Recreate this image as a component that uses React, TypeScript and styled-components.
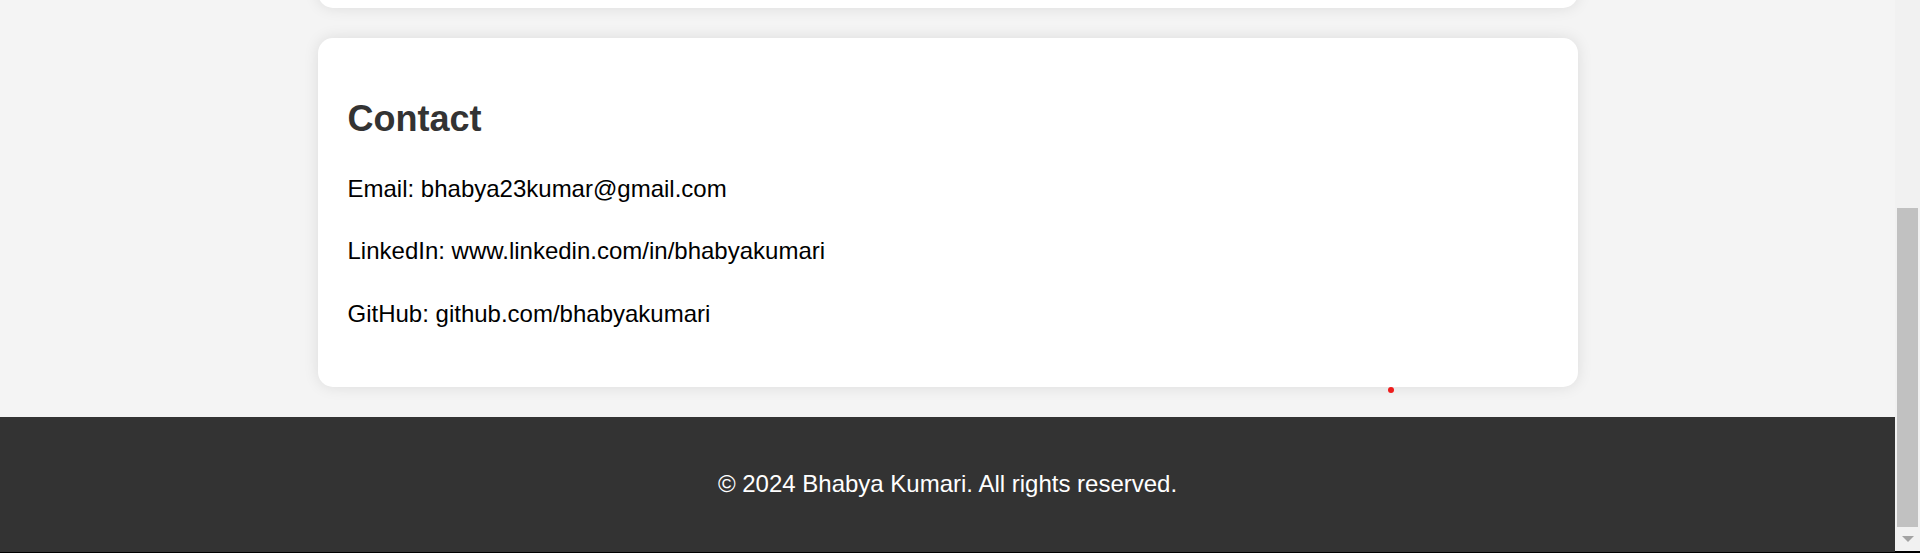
import React from "react";
import styled, { createGlobalStyle } from "styled-components";

const GlobalStyle = createGlobalStyle`
  html, body {
    margin: 0;
    padding: 0;
    height: 553px;
    overflow: hidden;
  }
  body {
    font-family: "Liberation Sans", Arial, sans-serif;
    font-size: 24px;
    line-height: 1.6;
    background: #f4f4f4;
    color: #000;
  }
`;

const Frame = styled.div`
  height: 553px;
  display: flex;
  flex-direction: column;
`;

const Window = styled.div`
  flex: 1;
  display: flex;
  min-height: 0;
`;

const Page = styled.div`
  flex: 1;
  display: flex;
  flex-direction: column;
  background: #f4f4f4;
  position: relative;
  min-width: 0;
`;

const Main = styled.main`
  display: flex;
  flex-direction: column;
  align-items: center;
  gap: 30px;
  padding-bottom: 30px;
`;

const Clip = styled.div`
  height: 8px;
  width: 1260px;
  display: flex;
  align-items: flex-end;
  overflow: visible;
  clip-path: inset(0 -30px -30px -30px);
`;

const Card = styled.section<{ $height?: number }>`
  box-sizing: border-box;
  width: 1260px;
  background: #fff;
  border-radius: 15px;
  box-shadow: 0 0 15px rgba(0, 0, 0, 0.1);
  padding: 30px;
  flex-shrink: 0;
  ${(p) => (p.$height ? `height: ${p.$height}px;` : "")}
`;

const Heading = styled.h2`
  margin: 30px 0;
  font-size: 36px;
  line-height: normal;
  font-weight: bold;
  color: #333;
`;

const Line = styled.p`
  margin: 24px 0;
`;

const Footer = styled.footer`
  background: #333;
  color: #fff;
  text-align: center;
  padding: 24px;
  flex: 1;
`;

const FooterText = styled.p`
  margin: 24px 0;
`;

const CursorDot = styled.span`
  position: absolute;
  left: 1388px;
  top: 387px;
  width: 6px;
  height: 6px;
  border-radius: 50%;
  background: #ee1c1c;
`;

const Scrollbar = styled.div`
  width: 25px;
  background: #f1f1f1;
  display: flex;
  flex-direction: column;
  align-items: center;
  padding-top: 208px;
  box-sizing: border-box;
`;

const Thumb = styled.div`
  width: 21px;
  height: 319px;
  background: #c1c1c1;
`;

const ArrowDown = styled.div`
  margin-top: 9px;
  width: 0;
  height: 0;
  border-left: 6px solid transparent;
  border-right: 6px solid transparent;
  border-top: 6px solid #a3a3a3;
`;

const BottomEdge = styled.div`
  height: 2px;
  background: #000;
`;

export default function App() {
  return (
    <>
      <GlobalStyle />
      <Frame>
        <Window>
          <Page>
            <Main>
              <Clip>
                <Card $height={60} />
              </Clip>
              <Card>
                <Heading>Contact</Heading>
                <Line>Email: bhabya23kumar@gmail.com</Line>
                <Line>LinkedIn: www.linkedin.com/in/bhabyakumari</Line>
                <Line>GitHub: github.com/bhabyakumari</Line>
              </Card>
            </Main>
            <Footer>
              <FooterText>© 2024 Bhabya Kumari. All rights reserved.</FooterText>
            </Footer>
            <CursorDot />
          </Page>
          <Scrollbar>
            <Thumb />
            <ArrowDown />
          </Scrollbar>
        </Window>
        <BottomEdge />
      </Frame>
    </>
  );
}
